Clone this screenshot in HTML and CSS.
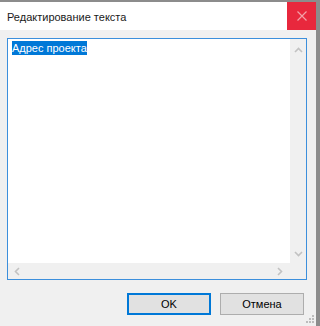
FILE: index.html
```html
<!DOCTYPE html>
<html lang="ru">
<head>
    <meta charset="UTF-8">
    <title>Редактирование текста</title>
    <link rel="stylesheet" href="styles.css">
</head>
<body>
<div class="window">
    <div class="titlebar">
        <div class="title">Редактирование текста</div>
        <div class="close">
            <svg width="10" height="10" viewBox="0 0 10 10"><path d="M0.5 0.5L9.5 9.5M9.5 0.5L0.5 9.5" stroke="#f2a0a8" stroke-width="1.2"/></svg>
        </div>
    </div>
    <div class="content">
        <div class="editor">
            <div class="text-area"><span class="selected">Адрес проекта</span></div>
            <div class="vscroll">
                <svg width="9" height="6" viewBox="0 0 9 6"><path d="M1 5L4.5 1.5L8 5" fill="none" stroke="#c2c2c2" stroke-width="1.6"/></svg>
                <svg width="9" height="6" viewBox="0 0 9 6"><path d="M1 1L4.5 4.5L8 1" fill="none" stroke="#c2c2c2" stroke-width="1.6"/></svg>
            </div>
            <div class="hscroll">
                <svg width="6" height="9" viewBox="0 0 6 9"><path d="M5 1L1.5 4.5L5 8" fill="none" stroke="#c2c2c2" stroke-width="1.6"/></svg>
                <svg width="6" height="9" viewBox="0 0 6 9"><path d="M1 1L4.5 4.5L1 8" fill="none" stroke="#c2c2c2" stroke-width="1.6"/></svg>
            </div>
            <div class="corner"></div>
        </div>
        <div class="buttons">
            <div class="btn btn-default">OK</div>
            <div class="btn">Отмена</div>
        </div>
    </div>
    <svg class="grip" width="10" height="10" viewBox="0 0 10 10" fill="#bcbcbc">
        <rect x="7" y="1" width="2" height="2"/>
        <rect x="4" y="4" width="2" height="2"/><rect x="7" y="4" width="2" height="2"/>
        <rect x="1" y="7" width="2" height="2"/><rect x="4" y="7" width="2" height="2"/><rect x="7" y="7" width="2" height="2"/>
    </svg>
</div>
</body>
</html>
```
FILE: styles.css
```css
*{
    margin: 0;
    padding: 0;
    box-sizing: border-box;
}
body{
    background-color: #f0f0f0;
    font-family: "Liberation Sans", "Noto Sans", sans-serif;
    font-size: 11px;
    color: #000;
}
.window{
    width: 320px;
    height: 326px;
    border-top: 2px solid #8c8c8c;
    border-right: 4px solid #8c8c8c;
    background-color: #f0f0f0;
    display: flex;
    flex-direction: column;
    position: relative;
}
.titlebar{
    height: 28px;
    background-color: #fff;
    display: flex;
    align-items: center;
}
.title{
    flex: 1;
    padding-left: 7px;
    padding-top: 1px;
    font-size: 11px;
    color: #1a1a1a;
}
.close{
    width: 29px;
    height: 28px;
    background-color: #e8283d;
    display: flex;
    align-items: center;
    justify-content: center;
}
.content{
    flex: 1;
    padding: 8px 12px 0 7px;
    display: flex;
    flex-direction: column;
}
.editor{
    width: 300px;
    height: 242px;
    border: 1px solid #3c8fdc;
    background-color: #fff;
    display: grid;
    grid-template-columns: 1fr 16px;
    grid-template-rows: 1fr 16px;
}
.text-area{
    padding: 2px 0 0 4px;
    line-height: 14px;
}
.selected{
    background-color: #0078d7;
    color: #fff;
    padding: 1px 0;
}
.vscroll{
    background-color: #f0f0f0;
    display: flex;
    flex-direction: column;
    justify-content: space-between;
    align-items: center;
    padding: 8px 0 6px;
}
.hscroll{
    background-color: #f0f0f0;
    display: flex;
    justify-content: space-between;
    align-items: center;
    padding: 0 7px 0 6px;
}
.corner{
    background-color: #f0f0f0;
}
.buttons{
    display: flex;
    justify-content: flex-end;
    gap: 9px;
    margin-top: 13px;
}
.btn{
    width: 84px;
    height: 22px;
    border: 1px solid #adadad;
    background-color: #e1e1e1;
    display: flex;
    align-items: center;
    justify-content: center;
    font-size: 11px;
}
.btn-default{
    border: 2px solid #0078d7;
}
.grip{
    position: absolute;
    right: 1px;
    bottom: 2px;
}
```
